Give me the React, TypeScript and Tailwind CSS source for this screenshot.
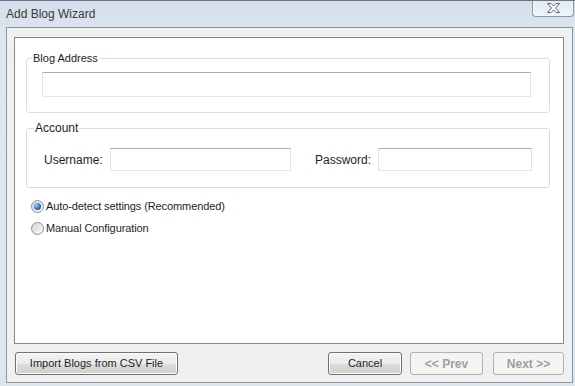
import React from 'react';

function Radio({ checked, label }: { checked?: boolean; label: string }) {
  return (
    <label className="flex items-center h-[16px]">
      <span className="w-[13px] h-[13px] rounded-full border border-[#8e8f8f] bg-gradient-to-br from-[#d4d4d4] to-[#fbfbfb] flex items-center justify-center">
        {checked && (
          <span className="w-[7px] h-[7px] rounded-full bg-[radial-gradient(circle_at_35%_35%,#a9d3fa,#2b6cc0_55%,#0c3a78)]" />
        )}
      </span>
      <span className="ml-[2px] tracking-[-0.1px] text-[#1e1e1e]">{label}</span>
    </label>
  );
}

function TextBox({ className }: { className: string }) {
  return (
    <input
      type="text"
      className={`bg-white border border-t-[#abadb3] border-x-[#e2e3ea] border-b-[#e3e9ef] outline-none ${className}`}
    />
  );
}

function WinButton({ label, disabled, className }: { label: string; disabled?: boolean; className: string }) {
  if (disabled) {
    return (
      <button
        disabled
        className={`h-[23px] rounded-[3px] border border-[#adb2b5] bg-[#f4f4f4] text-[#a0a0a0] ${className}`}
      >
        {label}
      </button>
    );
  }
  return (
    <button
      className={`h-[23px] rounded-[3px] border border-[#707070] bg-[linear-gradient(#f2f2f2,#ebebeb_50%,#dddddd_50%,#cfcfcf)] shadow-[inset_0_0_0_1px_#fcfcfc] text-[#1e1e1e] ${className}`}
    >
      {label}
    </button>
  );
}

export default function App() {
  return (
    <div className="w-[575px] h-[386px] flex flex-col border-t border-[#6b778a] bg-[linear-gradient(#d4deea,#dfe7f0_40px,#dde5ef)] font-['Liberation_Sans',Arial,sans-serif] text-[11px] overflow-hidden">
      {/* title bar */}
      <div className="h-[26px] flex items-start justify-between pl-[6px] pr-[1px]">
        <span className="mt-[6px] text-[12px] leading-[14px] text-[#3a3a3a]">Add Blog Wizard</span>
        <div className="w-[42px] h-[17px] -mt-px rounded-b-[4px] border border-t-0 border-[#8796ac] bg-[linear-gradient(#e3eaf3,#eef3f8)] shadow-[inset_0_0_0_1px_#f7f9fc] flex items-center justify-center">
          <svg width="13" height="10" viewBox="0 0 13 10">
            <polygon
              points="0.5,0.5 4,0.5 6.5,3 9,0.5 12.5,0.5 8.5,5 12.5,9.5 9,9.5 6.5,7 4,9.5 0.5,9.5 4.5,5"
              fill="#ffffff"
              stroke="#5d6679"
              strokeWidth="1"
              strokeLinejoin="round"
            />
          </svg>
        </div>
      </div>

      {/* client area */}
      <div className="flex-1 ml-[6px] mr-[2px] mb-[3px] border border-[#8a97a8] bg-[#f0f0f0] flex flex-col pl-[7px] pr-[8px] pt-[9px]">
        <div className="h-[307px] border border-[#828790] bg-white flex flex-col">
          <fieldset className="mt-[14px] ml-[11px] w-[524px] rounded-[3px] border border-[#d5dfe5] pl-[15px] pt-[7px] pb-[15px]">
            <legend className="-ml-[10px] px-[1px] leading-[13px] text-[#1e1e1e]">Blog Address</legend>
            <TextBox className="w-[489px] h-[25px]" />
          </fieldset>

          <fieldset className="mt-[9px] ml-[11px] w-[524px] rounded-[3px] border border-[#d5dfe5] pl-[17px] pt-[13px] pb-[16px]">
            <legend className="-ml-[10px] px-[1px] text-[12px] leading-[13px] text-[#1e1e1e]">Account</legend>
            <div className="flex items-center">
              <span className="w-[66px] text-[12px] text-[#1e1e1e]">Username:</span>
              <TextBox className="w-[181px] h-[23px]" />
              <span className="ml-[24px] w-[63px] text-[12px] text-[#1e1e1e]">Password:</span>
              <TextBox className="w-[154px] h-[23px]" />
            </div>
          </fieldset>

          <div className="mt-[10px] ml-[16px] flex flex-col gap-[6px]">
            <Radio checked label="Auto-detect settings (Recommended)" />
            <Radio label="Manual Configuration" />
          </div>
        </div>

        {/* buttons */}
        <div className="mt-[8px] flex items-center">
          <WinButton label="Import Blogs from CSV File" className="ml-px w-[163px]" />
          <WinButton label="Cancel" className="ml-auto w-[74px]" />
          <WinButton label="<< Prev" disabled className="ml-[8px] w-[73px] text-[12px] font-bold" />
          <WinButton label="Next >>" disabled className="ml-[10px] w-[71px] text-[12px] font-bold" />
        </div>
      </div>
    </div>
  );
}
